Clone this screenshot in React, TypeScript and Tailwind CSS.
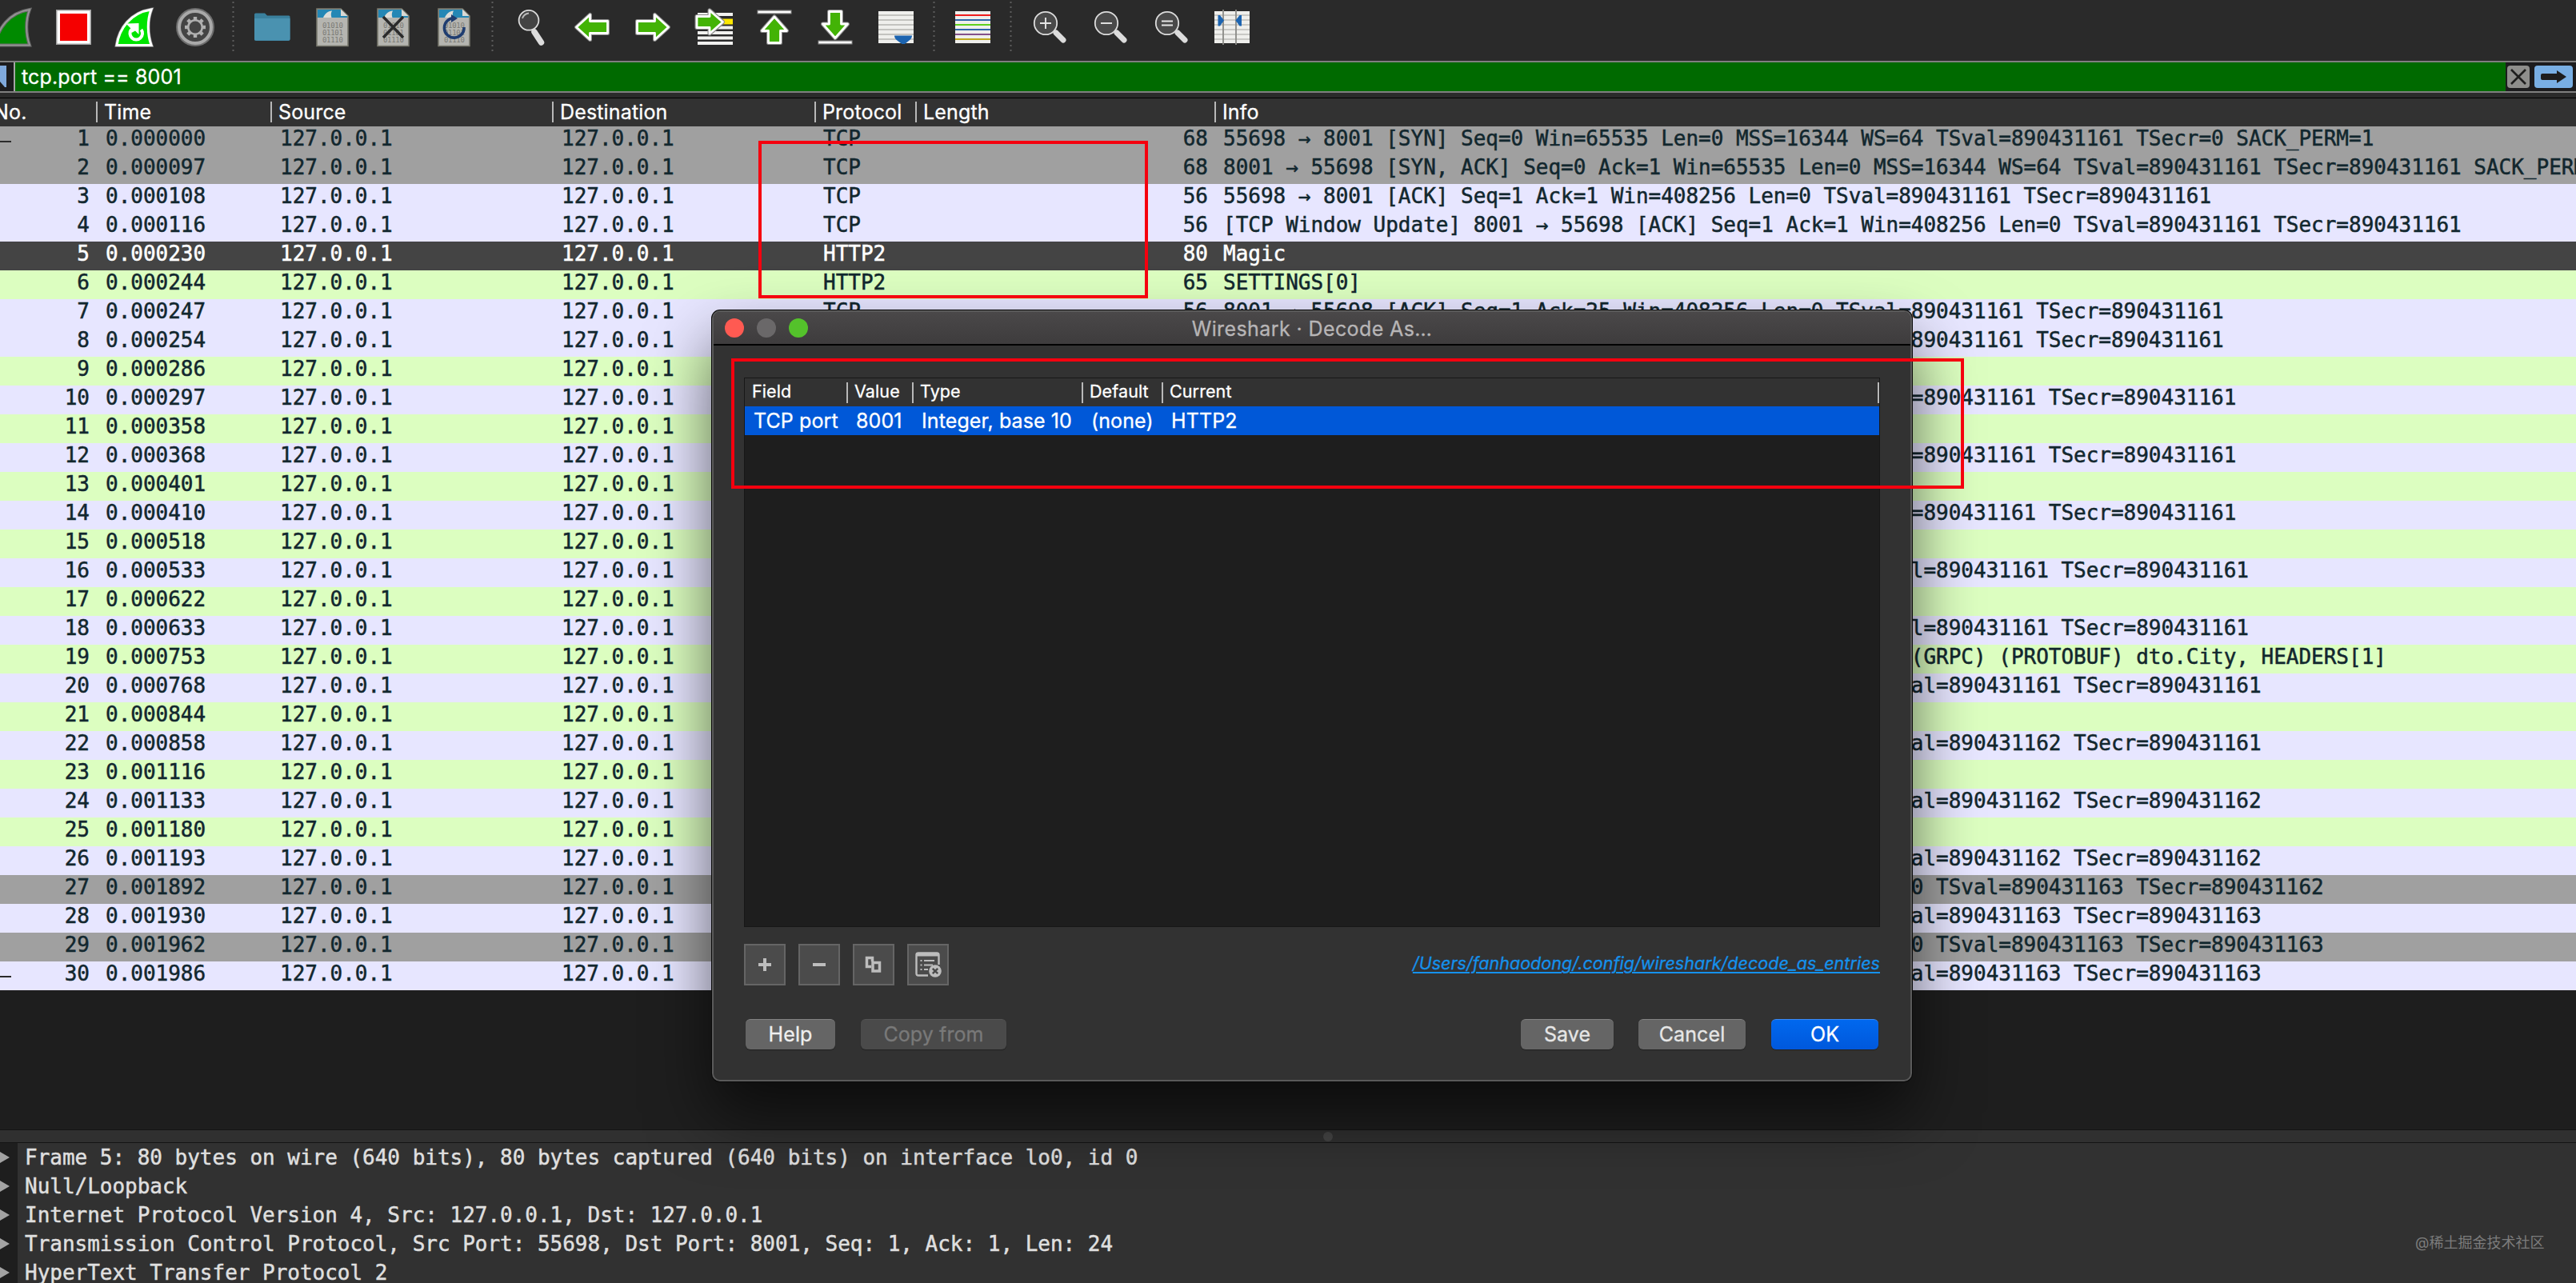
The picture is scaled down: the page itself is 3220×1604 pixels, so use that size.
import type { ReactNode } from "react";
import { clsx } from "clsx";

type RowTone = "gray" | "lavender" | "green" | "selected";

interface Packet {
  no: number;
  time: string;
  protocol: string;
  length: number;
  info: string;
  tone: RowTone;
}

const ADDRESS = "127.0.0.1";

const TONES: Record<RowTone, string> = {
  gray: "bg-[#a0a0a0] text-[#12272e]",
  lavender: "bg-[#e7e6ff] text-[#12272e]",
  green: "bg-[#dcfec0] text-[#12272e]",
  selected: "bg-[#444444] text-white",
};

function packet(
  no: number,
  time: string,
  tone: RowTone,
  protocol: string,
  length: number,
  info: string
): Packet {
  return { no, time, tone, protocol, length, info };
}

const PACKETS: Packet[] = [
  packet(1, "0.000000", "gray", "TCP", 68, "55698 → 8001 [SYN] Seq=0 Win=65535 Len=0 MSS=16344 WS=64 TSval=890431161 TSecr=0 SACK_PERM=1"),
  packet(2, "0.000097", "gray", "TCP", 68, "8001 → 55698 [SYN, ACK] Seq=0 Ack=1 Win=65535 Len=0 MSS=16344 WS=64 TSval=890431161 TSecr=890431161 SACK_PERM=1"),
  packet(3, "0.000108", "lavender", "TCP", 56, "55698 → 8001 [ACK] Seq=1 Ack=1 Win=408256 Len=0 TSval=890431161 TSecr=890431161"),
  packet(4, "0.000116", "lavender", "TCP", 56, "[TCP Window Update] 8001 → 55698 [ACK] Seq=1 Ack=1 Win=408256 Len=0 TSval=890431161 TSecr=890431161"),
  packet(5, "0.000230", "selected", "HTTP2", 80, "Magic"),
  packet(6, "0.000244", "green", "HTTP2", 65, "SETTINGS[0]"),
  packet(7, "0.000247", "lavender", "TCP", 56, "8001 → 55698 [ACK] Seq=1 Ack=25 Win=408256 Len=0 TSval=890431161 TSecr=890431161"),
  packet(8, "0.000254", "lavender", "TCP", 56, "8001 → 55698 [ACK] Seq=1 Ack=34 Win=408256 Len=0 TSval=890431161 TSecr=890431161"),
  packet(9, "0.000286", "green", "HTTP2", 71, "SETTINGS[0]"),
  packet(10, "0.000297", "lavender", "TCP", 56, "55698 → 8001 [ACK] Seq=34 Ack=16 Win=408256 Len=0 TSval=890431161 TSecr=890431161"),
  packet(11, "0.000358", "green", "HTTP2", 65, "SETTINGS[0]"),
  packet(12, "0.000368", "lavender", "TCP", 56, "55698 → 8001 [ACK] Seq=34 Ack=25 Win=408256 Len=0 TSval=890431161 TSecr=890431161"),
  packet(13, "0.000401", "green", "HTTP2", 65, "SETTINGS[0]"),
  packet(14, "0.000410", "lavender", "TCP", 56, "8001 → 55698 [ACK] Seq=25 Ack=43 Win=408256 Len=0 TSval=890431161 TSecr=890431161"),
  packet(15, "0.000518", "green", "HTTP2", 150, "HEADERS[1]: POST"),
  packet(16, "0.000533", "lavender", "TCP", 56, "8001 → 55698 [ACK] Seq=25 Ack=137 Win=408192 Len=0 TSval=890431161 TSecr=890431161"),
  packet(17, "0.000622", "green", "GRPC", 95, "DATA[1] (GRPC)"),
  packet(18, "0.000633", "lavender", "TCP", 56, "8001 → 55698 [ACK] Seq=25 Ack=176 Win=408128 Len=0 TSval=890431161 TSecr=890431161"),
  packet(19, "0.000753", "green", "GRPC", 170, "HEADERS[1]: 200 OK, WINDOW_UPDATE[0], PING[0], DATA[1] (GRPC) (PROTOBUF) dto.City, HEADERS[1]"),
  packet(20, "0.000768", "lavender", "TCP", 56, "55698 → 8001 [ACK] Seq=176 Ack=139 Win=408128 Len=0 TSval=890431161 TSecr=890431161"),
  packet(21, "0.000844", "green", "HTTP2", 73, "PING[0]"),
  packet(22, "0.000858", "lavender", "TCP", 56, "8001 → 55698 [ACK] Seq=139 Ack=193 Win=408128 Len=0 TSval=890431162 TSecr=890431161"),
  packet(23, "0.001116", "green", "HTTP2", 73, "PING[0]"),
  packet(24, "0.001133", "lavender", "TCP", 56, "55698 → 8001 [ACK] Seq=193 Ack=156 Win=408128 Len=0 TSval=890431162 TSecr=890431162"),
  packet(25, "0.001180", "green", "HTTP2", 73, "GOAWAY[0]"),
  packet(26, "0.001193", "lavender", "TCP", 56, "8001 → 55698 [ACK] Seq=156 Ack=210 Win=408064 Len=0 TSval=890431162 TSecr=890431162"),
  packet(27, "0.001892", "gray", "TCP", 56, "55698 → 8001 [FIN, ACK] Seq=210 Ack=156 Win=408128 Len=0 TSval=890431163 TSecr=890431162"),
  packet(28, "0.001930", "lavender", "TCP", 56, "8001 → 55698 [ACK] Seq=156 Ack=211 Win=408064 Len=0 TSval=890431163 TSecr=890431163"),
  packet(29, "0.001962", "gray", "TCP", 56, "8001 → 55698 [FIN, ACK] Seq=156 Ack=211 Win=408064 Len=0 TSval=890431163 TSecr=890431163"),
  packet(30, "0.001986", "lavender", "TCP", 56, "55698 → 8001 [ACK] Seq=211 Ack=157 Win=408128 Len=0 TSval=890431163 TSecr=890431163"),
];

const DETAILS = [
  "Frame 5: 80 bytes on wire (640 bits), 80 bytes captured (640 bits) on interface lo0, id 0",
  "Null/Loopback",
  "Internet Protocol Version 4, Src: 127.0.0.1, Dst: 127.0.0.1",
  "Transmission Control Protocol, Src Port: 55698, Dst Port: 8001, Seq: 1, Ack: 1, Len: 24",
  "HyperText Transfer Protocol 2",
];

const MONO =
  "font-['DejaVu_Sans_Mono',monospace] text-[26px] tracking-[-0.02px] [-webkit-text-stroke:0.5px_currentColor]";
const PACKET_GRID =
  "grid grid-cols-[120px_218px_352px_328px_126px_374px_1fr]";
const DECODE_GRID = "grid grid-cols-[127px_82px_212px_100px_1fr]";

/* ---------- toolbar icons, all on a 48x48 box ---------- */

function Icon({ children }: { children: ReactNode }) {
  return (
    <svg width="48" height="48" viewBox="0 0 48 48" fill="none" className="overflow-visible">
      {children}
    </svg>
  );
}

const FIN = "M45 2 C40 15 40 32 45 46.5 H2 C5 26 19 6 45 2 Z";

function StartIcon() {
  return (
    <Icon>
      <path d={FIN} fill="#008a00" stroke="#6c6c6c" strokeWidth="4" />
      <path d={FIN} stroke="#9a9a9a" strokeWidth="1.5" />
    </Icon>
  );
}

function StopIcon() {
  return (
    <Icon>
      <rect x="2" y="2" width="44" height="44" fill="#a0a0a0" />
      <rect x="3.5" y="3.5" width="41" height="41" fill="#ffffff" />
      <rect x="7" y="7" width="34" height="34" fill="#f50000" />
    </Icon>
  );
}

function RestartIcon() {
  return (
    <Icon>
      <path d={FIN} stroke="#8c8c8c" strokeWidth="4.5" />
      <path d={FIN} fill="#00e400" stroke="#ffffff" strokeWidth="3" />
      <path d="M20 27 A7.8 7.8 0 1 0 32.5 27" stroke="#ffffff" strokeWidth="4" />
      <path d="M13.5 19.5 L29.5 19 V33 L25 28.5 L20.5 31 L19 25 Z" fill="#ffffff" />
    </Icon>
  );
}

function OptionsIcon() {
  return (
    <Icon>
      <circle cx="24" cy="24" r="24" fill="#6e6e6e" />
      <circle cx="24" cy="24" r="20" fill="#444444" stroke="#a9a9a9" strokeWidth="4" />
      {[0, 45, 90, 135, 180, 225, 270, 315].map((deg) => (
        <rect
          key={deg}
          x="21.8"
          y="11"
          width="4.4"
          height="5"
          fill="#b0b0b0"
          transform={`rotate(${deg} 24 24)`}
        />
      ))}
      <circle cx="24" cy="24" r="8.8" stroke="#b0b0b0" strokeWidth="2.6" />
    </Icon>
  );
}

function OpenIcon() {
  return (
    <Icon>
      <path d="M2 8 Q2 6.5 3.5 6.5 H15 L18 9.5 H45 Q46.5 9.5 46.5 11 V39 Q46.5 41 44.5 41 H4 Q2 41 2 39 Z" fill="#3a809d" />
      <path d="M2 13 H46.5 V39 Q46.5 40.5 44.5 40.5 H4 Q2 40.5 2 39 Z" fill="#4a92b0" />
    </Icon>
  );
}

function FileIcon({ children }: { children?: ReactNode }) {
  return (
    <Icon>
      <path d="M4 1 H34 L43 10 V47.5 H4 Z" fill="#b5b5b0" stroke="#77776c" strokeWidth="1.6" />
      <path d="M5 2 H33.5 L42 10.5 V12 H5 Z" fill="#2487b5" />
      <path d="M12 12 C14 7 18 4 23 3.5 C21.5 6 21.5 9 22.5 12 Z" fill="#dcdcd8" />
      <path d="M34 1.5 V10 H42.5 Z" fill="#d9d9d4" />
      <g
        fill="#7b7b76"
        fontFamily="DejaVu Sans Mono, monospace"
        fontSize="9"
        letterSpacing="-0.3"
        strokeWidth="0"
      >
        <text x="11" y="25">01010</text>
        <text x="11" y="34">01101</text>
        <text x="11" y="43">01110</text>
      </g>
      {children}
    </Icon>
  );
}

function CloseFileIcon() {
  return (
    <FileIcon>
      <path d="M11 11 L36 37 M36 11 L11 37" stroke="#2b2b2b" strokeWidth="3.4" />
    </FileIcon>
  );
}

function ReloadFileIcon() {
  return (
    <FileIcon>
      <path d="M24 12.5 A12.3 12.3 0 1 0 36 24" stroke="#1f3d70" strokeWidth="3.6" />
      <path d="M20 8 L28 13 L20 18 Z" fill="#1f3d70" />
    </FileIcon>
  );
}

function FindIcon() {
  return (
    <Icon>
      <path d="M28 30 L36.5 43" stroke="#dcdcdc" strokeWidth="7.5" strokeLinecap="round" />
      <circle cx="21" cy="15.3" r="12.4" fill="#434343" stroke="#dcdcdc" strokeWidth="1.8" />
      <path d="M13 13 Q14.5 7.5 21 6.5" stroke="#b9b9b9" strokeWidth="1.8" />
    </Icon>
  );
}

function GreenArrow({ d }: { d: string }) {
  return (
    <>
      <path d={d} stroke="#8a8a8a" strokeWidth="5" strokeLinejoin="round" />
      <path d={d} fill="#43b306" stroke="#ffffff" strokeWidth="2.8" strokeLinejoin="round" />
    </>
  );
}

function BackIcon() {
  return (
    <Icon>
      <GreenArrow d="M4.5 24 L21.5 8.5 V16.5 H43.5 V31.5 H21.5 V39.5 Z" />
    </Icon>
  );
}

function ForwardIcon() {
  return (
    <Icon>
      <GreenArrow d="M43.5 24 L26.5 8.5 V16.5 H4.5 V31.5 H26.5 V39.5 Z" />
    </Icon>
  );
}

function GoToIcon() {
  return (
    <Icon>
      <path d="M4 8 H48 M4 24.5 H48 M4 31 H48 M4 37.5 H48 M4 44 H48" stroke="#f1f1ef" strokeWidth="4" />
      <rect x="4" y="13.5" width="44" height="7" fill="#fbe700" />
      <GreenArrow d="M35.5 17.5 L19 3 V10.5 H3 V24.5 H19 V32 Z" />
    </Icon>
  );
}

function FirstIcon() {
  return (
    <Icon>
      <path d="M2.5 5 H45.5" stroke="#8a8a8a" strokeWidth="5" />
      <path d="M3.5 5 H44.5" stroke="#ffffff" strokeWidth="2.6" />
      <GreenArrow d="M24 11 L39.5 28.5 H31.5 V43.5 H16.5 V28.5 H8.5 Z" />
    </Icon>
  );
}

function LastIcon() {
  return (
    <Icon>
      <path d="M2.5 43 H45.5" stroke="#8a8a8a" strokeWidth="5" />
      <path d="M3.5 43 H44.5" stroke="#ffffff" strokeWidth="2.6" />
      <GreenArrow d="M24 37.5 L39.5 20 H31.5 V4.5 H16.5 V20 H8.5 Z" />
    </Icon>
  );
}

function AutoScrollIcon() {
  return (
    <Icon>
      <rect x="2" y="4" width="44" height="40" fill="#efefec" />
      <path d="M2 9 H46 M2 15 H46 M2 21 H46 M2 27 H46 M2 33 H46 M2 39 H46" stroke="#c3c3bf" strokeWidth="1.8" />
      <path d="M22 34.5 H44 Q44 38 40 41 L35 45 H31.5 L26 41 Q22 38 22 34.5 Z" fill="#1c64b0" />
    </Icon>
  );
}

function ColorizeIcon() {
  const lines = ["#ef1c1c", "#2d67ab", "#5fd01e", "#2d67ab", "#84508a", "#c0a81c"];
  return (
    <Icon>
      <rect x="2" y="4" width="44" height="40" fill="#efefec" />
      {lines.map((color, i) => (
        <rect key={i} x="2" y={8 + i * 6} width="44" height="2" fill={color} />
      ))}
    </Icon>
  );
}

function ZoomIcon({ sign }: { sign: string }) {
  return (
    <Icon>
      <path d="M32 31 L41 40" stroke="#dcdcdc" strokeWidth="7" strokeLinecap="round" />
      <circle cx="19" cy="19" r="14.2" fill="#4a4a4a" stroke="#dcdcdc" strokeWidth="1.8" />
      <path d={sign} stroke="#e6e6e6" strokeWidth="1.9" />
    </Icon>
  );
}

function ResizeColumnsIcon() {
  return (
    <Icon>
      <rect x="2" y="4" width="44" height="40" fill="#efefec" />
      <path d="M2 9 H46 M2 15 H46 M2 21 H46 M2 27 H46 M2 33 H46 M2 39 H46" stroke="#c9c9c5" strokeWidth="1.8" />
      <path d="M13 2 V46 M29 2 V46" stroke="#8b8b87" strokeWidth="1.8" />
      <path d="M6.5 9 H9 L14 15.5 L9 22.5 H6.5 Z" fill="#1c64b0" />
      <path d="M36 9 H33.5 L28.5 15.5 L33.5 22.5 H36 Z" fill="#1c64b0" />
    </Icon>
  );
}

function ToolSeparator() {
  return (
    <svg width="20" height="76" viewBox="0 0 20 76">
      <path d="M9.5 2 V66" stroke="#5c5c5c" strokeWidth="2" strokeDasharray="2 4" />
    </svg>
  );
}

function ToolGroup({ icons }: { icons: ReactNode[] }) {
  return (
    <>
      {icons.map((icon, i) => (
        <button key={i} className="flex h-[68px] w-[76px] shrink-0 items-center justify-center">
          {icon}
        </button>
      ))}
    </>
  );
}

function Toolbar() {
  return (
    <div className="-ml-[22px] flex h-[76px] shrink-0 items-start bg-[#2a2a2a]">
      <ToolGroup icons={[<StartIcon />, <StopIcon />, <RestartIcon />, <OptionsIcon />]} />
      <ToolSeparator />
      <ToolGroup icons={[<OpenIcon />, <FileIcon />, <CloseFileIcon />, <ReloadFileIcon />]} />
      <ToolSeparator />
      <ToolGroup
        icons={[
          <FindIcon />,
          <BackIcon />,
          <ForwardIcon />,
          <GoToIcon />,
          <FirstIcon />,
          <LastIcon />,
          <AutoScrollIcon />,
        ]}
      />
      <ToolSeparator />
      <ToolGroup icons={[<ColorizeIcon />]} />
      <ToolSeparator />
      <ToolGroup
        icons={[
          <ZoomIcon sign="M12 19 H26 M19 12 V26" />,
          <ZoomIcon sign="M12 19 H26" />,
          <ZoomIcon sign="M12 16.5 H26 M12 21.5 H26" />,
          <ResizeColumnsIcon />,
        ]}
      />
    </div>
  );
}

function FilterBar() {
  return (
    <div className="flex h-10 shrink-0 items-stretch border-y-2 border-[#7f7f7f] bg-[#1c1c1e]">
      <svg width="17" height="36" viewBox="0 0 17 36">
        <path d="M0 4 H8 V31 H6 L0 24 Z" fill="#7fa9dc" />
      </svg>
      <div className="flex flex-1 items-center border-l-2 border-[#a5a5a5] bg-[#006a00] pl-2">
        <span className="text-[25px] leading-9 tracking-[0.15px] text-white">tcp.port == 8001</span>
      </div>
      <div className="flex w-[88px] items-center gap-1.5 pl-0.5">
        <svg width="28" height="28" viewBox="0 0 28 28">
          <rect width="28" height="28" rx="4" fill="#8e8e8c" />
          <path d="M5 5 L23 23 M23 5 L5 23" stroke="#1e1e1e" strokeWidth="2.6" />
        </svg>
        <svg width="48" height="28" viewBox="0 0 48 28">
          <rect width="48" height="28" rx="4" fill="#79afe4" />
          <path d="M8 12 Q8 10 10 10 H28 V6 L40 14 L28 22 V18 H10 Q8 18 8 16 Z" fill="#1e1e1e" />
        </svg>
      </div>
    </div>
  );
}

function PacketHeader() {
  const cell = "flex items-center border-l-2 border-[#b8b8b8] h-[26px] pl-2";
  return (
    <div
      className={clsx(
        PACKET_GRID,
        "mt-1.5 h-9 shrink-0 items-center border-t border-black bg-[#323232] pb-0.5 text-[25px] leading-[24px] tracking-[0.15px] text-white"
      )}
    >
      <div className="-ml-2">No.</div>
      <div className={cell}>Time</div>
      <div className={cell}>Source</div>
      <div className={cell}>Destination</div>
      <div className={cell}>Protocol</div>
      <div className={cell}>Length</div>
      <div className={cell}>Info</div>
    </div>
  );
}

function PacketRow({ row, marked }: { row: Packet; marked: boolean }) {
  return (
    <div className={clsx(PACKET_GRID, MONO, TONES[row.tone], "h-9 leading-[30px] whitespace-pre")}>
      <div className="flex justify-between pr-2">
        <span className={clsx("mt-[18px] h-0.5 w-3.5", marked && "bg-[#2b2b2b]")} />
        <span>{row.no}</span>
      </div>
      <div className="pl-3">{row.time}</div>
      <div className="pl-3">{ADDRESS}</div>
      <div className="pl-3">{ADDRESS}</div>
      <div className="pl-[11px]">{row.protocol}</div>
      <div className="pr-2 text-right">{row.length}</div>
      <div className="overflow-hidden pl-[11px]">{row.info}</div>
    </div>
  );
}

function DetailsPane() {
  return (
    <div className={clsx(MONO, "min-h-0 flex-1 overflow-hidden text-[#dfdfdf]")}>
      {DETAILS.map((line) => (
        <div key={line} className="flex h-9 leading-9 whitespace-pre">
          <div className="flex w-[22px] items-center bg-[#1e1e1e]">
            <svg width="12" height="14" viewBox="0 0 12 14">
              <path d="M0 0 L12 7 L0 14 Z" fill="#a3a3a3" />
            </svg>
          </div>
          <div className="pl-[9px]">{line}</div>
        </div>
      ))}
    </div>
  );
}

/* ---------- Decode As dialog ---------- */

function SquareButton({ children }: { children: ReactNode }) {
  return (
    <button className="flex size-[52px] items-center justify-center border-2 border-[#656565] bg-[#4b4b4b]">
      {children}
    </button>
  );
}

function PushButton({ label, className }: { label: string; className: string }) {
  return (
    <button
      className={clsx(
        "h-[38px] rounded-[6px] border-t pb-0.5 text-[25px] leading-[34px] tracking-[0.1px] shadow-[0_1px_1px_rgba(0,0,0,0.35)]",
        className
      )}
    >
      {label}
    </button>
  );
}

function DecodeTable() {
  const cell = "flex items-center h-[26px] border-l-2 border-[#b8b8b8] pb-0.5 pl-2";
  return (
    <div className="h-[687px] border border-[#171717] bg-[#1e1e1e]">
      <div className={clsx(DECODE_GRID, "h-[35px] items-center bg-[#323232] text-[21.5px] tracking-[0.1px] text-white")}>
        <div className="pb-0.5 pl-[9px]">Field</div>
        <div className={cell}>Value</div>
        <div className={cell}>Type</div>
        <div className={cell}>Default</div>
        <div className={clsx(cell, "border-r-2")}>Current</div>
      </div>
      <div className={clsx(DECODE_GRID, "h-9 items-center bg-[#0058d8] text-[25px] leading-9 tracking-[0.1px] text-white whitespace-nowrap")}>
        <div className="pl-[11px]">TCP port</div>
        <div className="pl-3">8001</div>
        <div className="pl-3">Integer, base 10</div>
        <div className="pl-3">(none)</div>
        <div className="pl-3">HTTP2</div>
      </div>
    </div>
  );
}

function DecodeAsDialog() {
  return (
    <div className="absolute top-[388px] left-[890px] flex h-[964px] w-[1500px] flex-col rounded-[10px] border-2 border-[#5a5a5a] bg-[#323232] shadow-[0_0_0_1px_#0a0a0a,0_40px_80px_rgba(0,0,0,0.6)]">
      <div className="relative flex h-[42px] shrink-0 items-center justify-center rounded-t-lg border-b-2 border-black bg-linear-to-b from-[#4a4849] to-[#3e3c3d]">
        <div className="absolute left-3.5 flex gap-4">
          <span className="size-6 rounded-full bg-[#ff5a52]" />
          <span className="size-6 rounded-full bg-[#6a6869]" />
          <span className="size-6 rounded-full bg-[#54c22b]" />
        </div>
        <span className="pt-0.5 text-[25px] leading-[38px] tracking-[0.4px] text-[#b7b5b6]">
          Wireshark · Decode As…
        </span>
      </div>
      <div className="flex flex-1 flex-col px-[38px] pt-10">
        <DecodeTable />
        <div className="mt-[21px] flex items-center justify-between">
          <div className="flex gap-4">
            <SquareButton>
              <svg width="18" height="18" viewBox="0 0 18 18">
                <path d="M9 1 V17 M1 9 H17" stroke="#bdbdbd" strokeWidth="4" />
              </svg>
            </SquareButton>
            <SquareButton>
              <svg width="18" height="18" viewBox="0 0 18 18">
                <path d="M1 9 H17" stroke="#bdbdbd" strokeWidth="4" />
              </svg>
            </SquareButton>
            <SquareButton>
              <svg width="22" height="22" viewBox="0 0 22 22" fill="none">
                <path d="M8 13.5 H2.5 V2.5 H9.5 V7" stroke="#bdbdbd" strokeWidth="3.5" />
                <rect x="10" y="8.5" width="8.5" height="10.5" stroke="#bdbdbd" strokeWidth="3.5" />
              </svg>
            </SquareButton>
            <SquareButton>
              <svg width="34" height="34" viewBox="0 0 34 34" fill="none">
                <path d="M17 30.5 H5 Q2.5 30.5 2.5 28 V4.5 Q2.5 2.5 5 2.5 H28 Q30.5 2.5 30.5 5 V17" stroke="#bdbdbd" strokeWidth="2.4" />
                <rect x="2.5" y="2" width="28" height="4.5" fill="#bdbdbd" />
                <path d="M7.5 12 H9.5 M12 12 H25 M7.5 17.5 H9.5 M12 17.5 H23 M7.5 23 H9.5 M12 23 H17" stroke="#bdbdbd" strokeWidth="2.2" />
                <circle cx="26" cy="25" r="7.8" fill="#bdbdbd" />
                <path d="M22.8 21.8 L29.2 28.2 M29.2 21.8 L22.8 28.2" stroke="#4b4b4b" strokeWidth="2.4" />
              </svg>
            </SquareButton>
          </div>
          <a className="pb-[3px] text-[21.5px] tracking-[0.04px] whitespace-nowrap text-[#1591ec] italic underline decoration-2 underline-offset-3">
            /Users/fanhaodong/.config/wireshark/decode_as_entries
          </a>
        </div>
        <div className="mt-[42px] flex items-center px-0.5">
          <PushButton label="Help" className="w-[112px] border-[#838383] bg-[#656565] text-[#efefef]" />
          <PushButton label="Copy from" className="ml-8 w-[182px] border-[#555555] bg-[#4a4a4a] text-[#797979]" />
          <PushButton label="Save" className="ml-auto w-[116px] border-[#838383] bg-[#656565] text-[#e6e6e6]" />
          <PushButton label="Cancel" className="ml-[31px] w-[134px] border-[#838383] bg-[#656565] text-[#e6e6e6]" />
          <PushButton label="OK" className="ml-8 w-[134px] border-[#3d8bf5] bg-linear-to-b from-[#0068ee] to-[#0058dc] text-white" />
        </div>
      </div>
    </div>
  );
}

export default function App() {
  return (
    <div className="relative flex h-[1604px] w-[3220px] flex-col overflow-hidden bg-[#2a2a2a] font-['Inter','Noto_Sans_CJK_SC',sans-serif] [-webkit-text-stroke:0.3px_currentColor]">
      <Toolbar />
      <FilterBar />
      <PacketHeader />
      <div className="h-[1254px] shrink-0 bg-[#1e1e1e]">
        {PACKETS.map((row) => (
          <PacketRow key={row.no} row={row} marked={row.no === 1 || row.no === 30} />
        ))}
      </div>
      <div className="flex h-[17px] shrink-0 items-center border-y border-[#141414] bg-[#303030]">
        <span className="ml-[1654px] size-3 rounded-full bg-[#454545]" />
      </div>
      <div className="flex min-h-0 flex-1 bg-[#313131]">
        <DetailsPane />
      </div>

      <DecodeAsDialog />

      {/* Highlight boxes drawn over the capture */}
      <div className="absolute top-[176px] left-[948px] h-[197px] w-[487px] border-4 border-[#f5000f]" />
      <div className="absolute top-[448px] left-[914px] h-[163px] w-[1541px] border-4 border-[#f5000f]" />

      <span className="absolute top-[1542px] left-[3019px] text-[18px] leading-6 whitespace-nowrap text-[#7c7c7c] [-webkit-text-stroke:0px]">
        @稀土掘金技术社区
      </span>
    </div>
  );
}
